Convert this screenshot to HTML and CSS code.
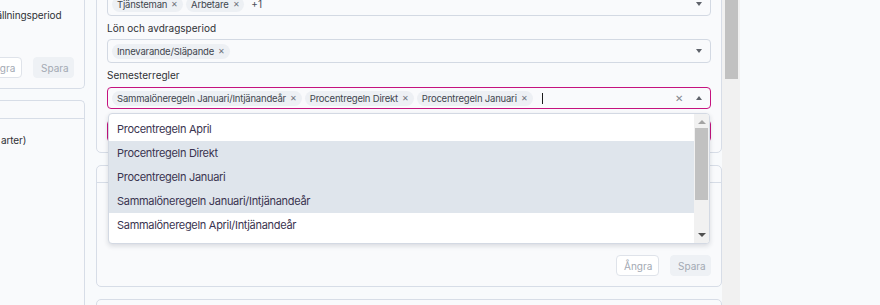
FILE: index.html
```html
<!DOCTYPE html>
<html lang="sv">
<head>
    <meta charset="UTF-8">
    <title>Avtalsinställningar</title>
    <link rel="stylesheet" href="styles.css">
</head>
<body>

<div class="page">
    <!-- left column, partly scrolled out of view -->
    <div class="side">
        <div class="card side-card-top">
            <p class="side-text">Använd provanställningsperiod</p>
            <div class="actions">
                <button class="btn btn-undo">Ångra</button>
                <button class="btn btn-save">Spara</button>
            </div>
        </div>
        <div class="card side-card">
            <div class="card-head"></div>
            <p class="side-text">Semesterlön (alla arter)</p>
        </div>
    </div>

    <div class="main">
        <div class="card main-card">
            <div class="field">
                <span class="tag">Tjänsteman <span class="tag-x">&#x2715;</span></span>
                <span class="tag">Arbetare <span class="tag-x">&#x2715;</span></span>
                <span class="more">+1</span>
                <span class="caret"></span>
            </div>

            <label class="label">Lön och avdragsperiod</label>
            <div class="field">
                <span class="tag">Innevarande/Släpande <span class="tag-x">&#x2715;</span></span>
                <span class="caret"></span>
            </div>

            <label class="label">Semesterregler</label>
            <div class="select-wrap">
                <div class="field field-open">
                    <span class="tag">Sammalöneregeln Januari/Intjänandeår <span class="tag-x">&#x2715;</span></span>
                    <span class="tag">Procentregeln Direkt <span class="tag-x">&#x2715;</span></span>
                    <span class="tag">Procentregeln Januari <span class="tag-x">&#x2715;</span></span>
                    <span class="cursor"></span>
                    <span class="clear">&#x2715;</span>
                    <span class="caret caret-up"></span>
                </div>

                <div class="menu">
                    <div class="menu-list">
                        <div class="option">Procentregeln April</div>
                        <div class="option selected">Procentregeln Direkt</div>
                        <div class="option selected">Procentregeln Januari</div>
                        <div class="option selected">Sammalöneregeln Januari/Intjänandeår</div>
                        <div class="option">Sammalöneregeln April/Intjänandeår</div>
                    </div>
                    <div class="menu-scroll">
                        <span class="arrow-up"></span>
                        <div class="menu-thumb"></div>
                        <span class="arrow-down"></span>
                    </div>
                </div>
            </div>

            <div class="field field-error"></div>
        </div>

        <div class="card main-card-2">
            <div class="card-head"></div>
            <div class="card-body">
                <div class="body-space"></div>
                <div class="actions">
                    <button class="btn btn-undo">Ångra</button>
                    <button class="btn btn-save">Spara</button>
                </div>
            </div>
        </div>

        <div class="card main-card-3"></div>
    </div>

    <div class="scrollbar">
        <div class="thumb"></div>
    </div>
</div>

</body>
</html>
```

FILE: styles.css
```css
body {
    margin: 0;
    background: #f8fafc;
    font-family: Inter, "Noto Sans", sans-serif;
    color: #2f3136;
    height: 305px;
    overflow: hidden;
}

.page {
    display: flex;
    align-items: flex-start;
    height: 305px;
}

.card {
    background: #f9fafc;
    border: 1px solid #d7dde7;
    border-radius: 5px;
}

/* Left column */
.side {
    width: 178px;
    margin-left: -93px;
    flex-shrink: 0;
}

.side-card-top {
    border-top: none;
    border-radius: 0 0 5px 5px;
    padding: 8px 10px 10px;
}

.side-text {
    margin: 0;
    font-size: 10px;
    line-height: 14px;
    letter-spacing: -0.1px;
    white-space: nowrap;
}

.side-card-top .actions {
    margin-top: 35px;
}

.side-card {
    margin-top: 11px;
    height: 220px;
    border-bottom: none;
    border-radius: 5px 5px 0 0;
}

.side-card .card-head {
    height: 17px;
    border-bottom: 1px solid #d7dde7;
}

.side-card .side-text {
    padding: 14px 10px;
}

.actions {
    display: flex;
    justify-content: flex-end;
    gap: 11px;
}

.btn {
    font-family: inherit;
    font-size: 10px;
    height: 21px;
    padding: 0 7px;
    border-radius: 4px;
    color: #a3a9b3;
    cursor: pointer;
}

.btn-undo {
    background: #fff;
    border: 1px solid #dfe3ea;
    width: 43px;
}

.btn-save {
    background: #eef1f5;
    border: 1px solid #eef1f5;
    width: 41px;
}

/* Main column */
.main {
    width: 626px;
    margin-left: 11px;
    margin-top: -20px;
    flex-shrink: 0;
}

.main-card {
    padding: 11px 10px 10px;
}

.label {
    display: block;
    font-size: 10px;
    line-height: 14px;
    margin: 5px 0 4px;
    color: #2f3136;
}

.field {
    position: relative;
    display: flex;
    align-items: center;
    gap: 3px;
    height: 24px;
    box-sizing: border-box;
    padding: 0 4px;
    background: #f9fafc;
    border: 1px solid #d3d9e3;
    border-radius: 4px;
}

.label + .select-wrap {
    margin-top: 5px;
}

.select-wrap {
    position: relative;
}

.field-open {
    height: 22px;
    border-color: #c5137f;
}

.tag {
    display: inline-flex;
    align-items: center;
    gap: 4px;
    height: 15px;
    padding: 0 5px;
    background: #edf0f4;
    border-radius: 8px;
    font-size: 9.5px;
    letter-spacing: -0.2px;
    color: #41464f;
    white-space: nowrap;
}

.tag-x {
    font-size: 8px;
    color: #6f747c;
}

.more {
    margin-left: 4px;
    font-size: 10px;
    color: #4b505a;
}

.caret {
    position: absolute;
    right: 8px;
    top: 50%;
    margin-top: -2px;
    width: 0;
    height: 0;
    border-left: 3.5px solid transparent;
    border-right: 3.5px solid transparent;
    border-top: 4px solid #5f636b;
}

.caret-up {
    border-top: none;
    border-bottom: 4px solid #5f636b;
}

.clear {
    position: absolute;
    right: 27px;
    font-size: 10px;
    color: #84888f;
}

.cursor {
    width: 1px;
    height: 11px;
    margin-left: 6px;
    background: #1b1b1b;
}

.field-error {
    margin-top: 11px;
    height: 22px;
    border-color: #c5137f;
}

/* Dropdown menu */
.menu {
    position: absolute;
    top: 26px;
    left: 1px;
    width: 602px;
    height: 131px;
    box-sizing: border-box;
    display: flex;
    background: #fff;
    border: 1px solid #d3d9e3;
    border-radius: 4px;
    box-shadow: 0 2px 5px rgba(20, 30, 50, 0.14);
    z-index: 10;
    overflow: hidden;
}

.menu-list {
    flex: 1;
    padding-top: 3px;
}

.option {
    height: 24px;
    line-height: 24px;
    padding-left: 8px;
    font-size: 11px;
    letter-spacing: -0.3px;
    color: #3a3450;
}

.option.selected {
    background: #dfe5ec;
}

.menu-scroll {
    width: 15px;
    background: #f1f1f1;
    display: flex;
    flex-direction: column;
    align-items: center;
}

.arrow-up,
.arrow-down {
    width: 0;
    height: 0;
    border-left: 4px solid transparent;
    border-right: 4px solid transparent;
}

.arrow-up {
    margin-top: 6px;
    border-bottom: 4px solid #a3a3a3;
}

.arrow-down {
    margin-top: auto;
    margin-bottom: 6px;
    border-top: 4px solid #505050;
}

.menu-thumb {
    margin-top: 4px;
    width: 13px;
    height: 72px;
    background: #c1c1c1;
}

.main-card-2 {
    margin-top: 12px;
}

.card-head {
    height: 16px;
    border-bottom: 1px solid #d7dde7;
}

.card-body {
    padding: 0 10px 10px;
}

.body-space {
    height: 72px;
}

.main-card-3 {
    margin-top: 12px;
    height: 40px;
}

/* Page scrollbar */
.scrollbar {
    width: 18px;
    height: 305px;
    background: #f1f1f1;
    flex-shrink: 0;
}

.thumb {
    margin-left: 3px;
    width: 13px;
    height: 79px;
    background: #c1c1c1;
}
```
